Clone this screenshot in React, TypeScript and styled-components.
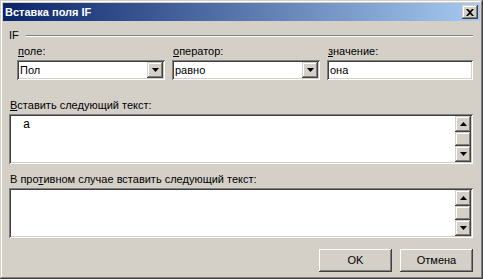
import React from "react";
import styled, { createGlobalStyle } from "styled-components";

const Global = createGlobalStyle`
  html, body { margin: 0; padding: 0; background: #D4D0C8; }
  body { font-family: Tahoma, "Liberation Sans", "DejaVu Sans", sans-serif; font-size: 11px; color: #000; }
  * { box-sizing: border-box; }
`;

const sunken = `
  background: #fff;
  box-shadow: inset 1px 1px #808080, inset -1px -1px #fff, inset 2px 2px #404040, inset -2px -2px #D4D0C8;
`;

const raised = `
  background: #D4D0C8;
  box-shadow: inset -1px -1px #404040, inset 1px 1px #D4D0C8, inset -2px -2px #808080, inset 2px 2px #fff;
`;

const Window = styled.div`
  width: 483px;
  height: 279px;
  padding: 3px;
  background: #D4D0C8;
  display: flex;
  flex-direction: column;
  box-shadow: inset -1px -1px #404040, inset 1px 1px #D4D0C8, inset -2px -2px #808080, inset 2px 2px #fff;
`;

const TitleBar = styled.div`
  height: 18px;
  flex: none;
  display: flex;
  align-items: center;
  justify-content: space-between;
  padding: 0 2px 0 2px;
  background: linear-gradient(to right, #0A246A, #A6CAF0);
`;

const Title = styled.span`
  color: #fff;
  font-weight: bold;
  font-size: 11px;
  line-height: 13px;
`;

const CloseBtn = styled.div`
  width: 16px;
  height: 14px;
  display: flex;
  align-items: center;
  justify-content: center;
  ${raised}
`;

const Content = styled.div`
  flex: 1;
  display: flex;
  flex-direction: column;
  padding: 8px 7px 0 6px;
`;

const GroupHeader = styled.div`
  display: flex;
  align-items: center;
  height: 13px;
  gap: 7px;
  line-height: 13px;
`;

const GroupRule = styled.div`
  flex: 1;
  border-top: 1px solid #808080;
  border-bottom: 1px solid #fff;
  height: 2px;
`;

const Fields = styled.div`
  display: grid;
  grid-template-columns: 148px 148px 1fr;
  column-gap: 7px;
  margin: 3px 0 0 8px;
`;

const Field = styled.div`
  display: flex;
  flex-direction: column;
`;

const Label = styled.div<{ $mt?: number }>`
  line-height: 13px;
  height: 13px;
  padding-left: 1px;
  margin-top: ${(p) => p.$mt ?? 0}px;
  margin-bottom: 2px;
  white-space: nowrap;
`;

const Combo = styled.div`
  height: 20px;
  display: flex;
  align-items: center;
  padding: 2px;
  ${sunken}
`;

const ComboText = styled.span`
  flex: 1;
  padding-left: 1px;
  line-height: 16px;
`;

const SmallBtn = styled.div`
  width: 16px;
  height: 16px;
  flex: none;
  display: flex;
  align-items: center;
  justify-content: center;
  ${raised}
`;

const Thumb = styled.div`
  flex: 1;
  ${raised}
`;

const TextArea = styled.div`
  height: 50px;
  display: flex;
  padding: 2px;
  ${sunken}
`;

const AreaText = styled.div`
  flex: 1;
  padding: 3px 0 0 12px;
  font-family: "Liberation Mono", "Courier New", monospace;
  font-size: 12px;
  line-height: 13px;
`;

const ScrollBar = styled.div`
  width: 16px;
  display: flex;
  flex-direction: column;
  background: #ECEAE6;
`;

const Buttons = styled.div`
  display: flex;
  justify-content: flex-end;
  gap: 8px;
  margin-top: 11px;
`;

const Button = styled.div`
  width: 73px;
  height: 23px;
  display: flex;
  align-items: center;
  justify-content: center;
  padding-bottom: 1px;
  background: #D4D0C8;
  box-shadow: inset -1px -1px #404040, inset 1px 1px #fff, inset -2px -2px #808080, inset 2px 2px #D4D0C8;
`;

const Down = () => (
  <svg width="7" height="4" viewBox="0 0 7 4">
    <path d="M0 0h7L3.5 4z" fill="#000" />
  </svg>
);

const Up = () => (
  <svg width="7" height="4" viewBox="0 0 7 4">
    <path d="M0 4h7L3.5 0z" fill="#000" />
  </svg>
);

const CloseIcon = () => (
  <svg width="8" height="7" viewBox="0 0 8 7">
    <path d="M0 0h2l2 2 2-2h2L5 3.5 8 7H6L4 5 2 7H0l3-3.5z" fill="#000" />
  </svg>
);

const Scroll = () => (
  <ScrollBar>
    <SmallBtn>
      <Up />
    </SmallBtn>
    <Thumb />
    <SmallBtn>
      <Down />
    </SmallBtn>
  </ScrollBar>
);

export default function App() {
  return (
    <>
      <Global />
      <Window>
        <TitleBar>
          <Title>Вставка поля IF</Title>
          <CloseBtn>
            <CloseIcon />
          </CloseBtn>
        </TitleBar>
        <Content>
          <GroupHeader>
            <span>IF</span>
            <GroupRule />
          </GroupHeader>
          <Fields>
            <Field>
              <Label>
                <u>п</u>оле:
              </Label>
              <Combo>
                <ComboText>Пол</ComboText>
                <SmallBtn>
                  <Down />
                </SmallBtn>
              </Combo>
            </Field>
            <Field>
              <Label>
                <u>о</u>ператор:
              </Label>
              <Combo>
                <ComboText>равно</ComboText>
                <SmallBtn>
                  <Down />
                </SmallBtn>
              </Combo>
            </Field>
            <Field>
              <Label>
                <u>з</u>начение:
              </Label>
              <Combo>
                <ComboText>она</ComboText>
              </Combo>
            </Field>
          </Fields>
          <Label $mt={19}>
            <u>В</u>ставить следующий текст:
          </Label>
          <TextArea>
            <AreaText>a</AreaText>
            <Scroll />
          </TextArea>
          <Label $mt={9}>
            В про<u>т</u>ивном случае вставить следующий текст:
          </Label>
          <TextArea>
            <AreaText />
            <Scroll />
          </TextArea>
          <Buttons>
            <Button>OK</Button>
            <Button>Отмена</Button>
          </Buttons>
        </Content>
      </Window>
    </>
  );
}
